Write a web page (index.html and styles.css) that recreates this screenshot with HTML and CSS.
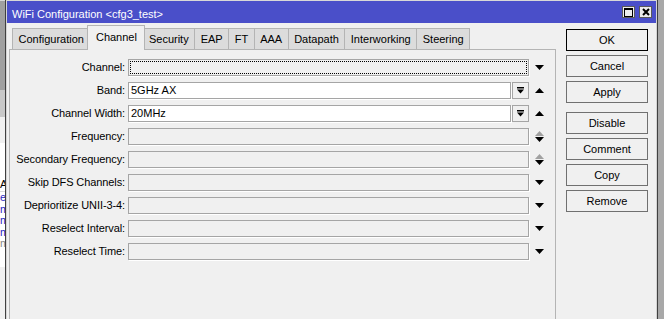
FILE: index.html
```html
<!DOCTYPE html>
<html>
<head>
<meta charset="utf-8">
<title>WiFi Configuration</title>
<link rel="stylesheet" href="styles.css">
</head>
<body>
<div class="screen">
  <div class="bg-left">
    <div class="bl-gray"></div>
    <div class="bl-mid"></div>
    <div class="bl-light"></div>
    <div class="bl-list">
      <div class="bl-head">A</div>
      <div class="bl-item">e</div>
      <div class="bl-item">m</div>
      <div class="bl-item">m</div>
      <div class="bl-item">m</div>
      <div class="bl-item dim">m</div>
    </div>
    <div class="bl-rest"></div>
  </div>

  <div class="window">
    <div class="frame">
      <div class="titlebar">
        <span class="title">WiFi Configuration &lt;cfg3_test&gt;</span>
        <div class="wbtns">
          <span class="wbtn"><svg width="9" height="9" viewBox="0 0 9 9"><path d="M0 0h9v9H0z M1 2v6h7V2z" fill="#000" fill-rule="evenodd"/></svg></span>
          <span class="wbtn"><svg width="8" height="8" viewBox="0 0 8 8"><path d="M1 1L7 7M7 1L1 7" stroke="#000" stroke-width="2" fill="none"/></svg></span>
        </div>
      </div>

      <div class="client">
        <div class="main">
          <div class="tabs">
            <div class="tab">Configuration</div>
            <div class="tab active">Channel</div>
            <div class="tab">Security</div>
            <div class="tab">EAP</div>
            <div class="tab">FT</div>
            <div class="tab">AAA</div>
            <div class="tab">Datapath</div>
            <div class="tab">Interworking</div>
            <div class="tab">Steering</div>
          </div>
          <div class="panel">
            <div class="form">
              <div class="lbl">Channel:</div>
              <div class="fld"><div class="inp focus"></div></div>
              <div class="ctl"><svg class="tri" width="9" height="5" viewBox="0 0 9 5"><path d="M0 0h9L4.5 5z"/></svg></div>

              <div class="lbl">Band:</div>
              <div class="fld"><div class="inp edit">5GHz AX</div><span class="ddbtn"><svg width="7" height="7" viewBox="0 0 7 7"><path d="M0 0h7v1.5H0z M0 2.5h7L3.5 6.5z"/></svg></span></div>
              <div class="ctl"><svg class="tri" width="9" height="5" viewBox="0 0 9 5"><path d="M0 5h9L4.5 0z"/></svg></div>

              <div class="lbl">Channel Width:</div>
              <div class="fld"><div class="inp edit">20MHz</div><span class="ddbtn"><svg width="7" height="7" viewBox="0 0 7 7"><path d="M0 0h7v1.5H0z M0 2.5h7L3.5 6.5z"/></svg></span></div>
              <div class="ctl"><svg class="tri" width="9" height="5" viewBox="0 0 9 5"><path d="M0 5h9L4.5 0z"/></svg></div>

              <div class="lbl">Frequency:</div>
              <div class="fld"><div class="inp"></div></div>
              <div class="ctl"><svg class="tri" width="9" height="11" viewBox="0 0 9 11"><path d="M0 5h9L4.5 0z" fill="#a0a0a0"/><path d="M0 6h9L4.5 11z"/></svg></div>

              <div class="lbl">Secondary Frequency:</div>
              <div class="fld"><div class="inp"></div></div>
              <div class="ctl"><svg class="tri" width="9" height="11" viewBox="0 0 9 11"><path d="M0 5h9L4.5 0z" fill="#a0a0a0"/><path d="M0 6h9L4.5 11z"/></svg></div>

              <div class="lbl">Skip DFS Channels:</div>
              <div class="fld"><div class="inp"></div></div>
              <div class="ctl"><svg class="tri" width="9" height="5" viewBox="0 0 9 5"><path d="M0 0h9L4.5 5z"/></svg></div>

              <div class="lbl">Deprioritize UNII-3-4:</div>
              <div class="fld"><div class="inp"></div></div>
              <div class="ctl"><svg class="tri" width="9" height="5" viewBox="0 0 9 5"><path d="M0 0h9L4.5 5z"/></svg></div>

              <div class="lbl">Reselect Interval:</div>
              <div class="fld"><div class="inp"></div></div>
              <div class="ctl"><svg class="tri" width="9" height="5" viewBox="0 0 9 5"><path d="M0 0h9L4.5 5z"/></svg></div>

              <div class="lbl">Reselect Time:</div>
              <div class="fld"><div class="inp"></div></div>
              <div class="ctl"><svg class="tri" width="9" height="5" viewBox="0 0 9 5"><path d="M0 0h9L4.5 5z"/></svg></div>
            </div>
          </div>
        </div>

        <div class="buttons">
          <div class="btn default">OK</div>
          <div class="btn">Cancel</div>
          <div class="btn">Apply</div>
          <div class="btn group">Disable</div>
          <div class="btn">Comment</div>
          <div class="btn">Copy</div>
          <div class="btn">Remove</div>
        </div>
      </div>
    </div>
  </div>

  <div class="bg-right"></div>
</div>
</body>
</html>
```

FILE: styles.css
```css
* { box-sizing: border-box; margin: 0; padding: 0; }

html, body {
  width: 664px;
  height: 319px;
  overflow: hidden;
  background: #a0a0a0;
}

body {
  font-family: "Liberation Sans", Arial, sans-serif;
  font-size: 11px;
  color: #000;
}

.screen {
  display: flex;
  height: 319px;
  overflow: hidden;
}

/* background application (left edge) */
.bg-left {
  width: 5px;
  flex: none;
  display: flex;
  flex-direction: column;
  overflow: hidden;
}
.bl-gray { height: 90px; background: #a0a0a0; border-top: 1px solid #d8d8d8; }
.bl-mid { height: 27px; background: #c8c8c8; }
.bl-light { height: 27px; background: #f0f0f0; border-bottom: 1px solid #fff; }
.bl-list {
  height: 123px;
  background: #fff;
  padding-top: 34px;
  line-height: 11.5px;
  white-space: nowrap;
}
.bl-head { height: 14px; line-height: 13px; border-bottom: 1px solid #dcdcdc; color: #000; }
.bl-item { height: 11.5px; color: #2a2ac0; }
.bl-item.dim { color: #8a8a8a; }
.bl-rest { flex: 1; background: #f0f0f0; }

.bg-right {
  flex: 1;
  background: #a8a8a8;
}

/* window */
.window {
  width: 653px;
  flex: none;
  height: 340px;
  border-left: 1px solid #404040;
  border-right: 1px solid #404040;
  background: #d4d4d4;
  padding: 0 1px;
}
.frame {
  height: 100%;
  background: #f0f0f0;
  display: flex;
  flex-direction: column;
  border-top: 1px solid #d8d8d8;
}

.titlebar {
  height: 22px;
  flex: none;
  background: #4a4fc9;
  display: flex;
  justify-content: space-between;
  align-items: center;
  padding: 0 4px 0 5px;
}
.title {
  color: #fff;
  font-size: 11px;
  padding-top: 3px;
}
.wbtns { display: flex; gap: 4px; }
.wbtn {
  width: 13px;
  height: 12px;
  background: #ececec;
  border: 1px solid #5a5a5a;
  display: flex;
  align-items: center;
  justify-content: center;
}

.client {
  flex: 1;
  display: flex;
  padding: 2px 8px 0 2px;
}

.main {
  width: 547px;
  flex: none;
  display: flex;
  flex-direction: column;
}

.tabs {
  height: 24px;
  flex: none;
  display: flex;
  align-items: flex-end;
  padding-left: 3px;
}
.tab {
  height: 21px;
  line-height: 21px;
  padding: 0 5.5px;
  background: #dcdcdc;
  border: 1px solid #b4b4b4;
  border-bottom: none;
  margin-right: -1px;
  white-space: nowrap;
}
.tab.active {
  height: 25px;
  line-height: 22px;
  padding: 0 7.5px;
  margin: 0 -3px -1px -2px;
  background: #f0f0f0;
  position: relative;
  z-index: 1;
}

.panel {
  flex: 1;
  border: 1px solid #b4b4b4;
  background: #f0f0f0;
}

.form {
  display: grid;
  grid-template-columns: 118px 401px 26px;
  grid-auto-rows: 17px;
  row-gap: 6px;
  padding-top: 9px;
}
.lbl {
  text-align: right;
  padding-right: 3px;
  line-height: 17px;
  white-space: nowrap;
  letter-spacing: -0.1px;
}
.fld {
  display: flex;
  gap: 1px;
}
.inp {
  flex: 1;
  height: 17px;
  border: 1px solid #a5a5a5;
  box-shadow: 1px 1px 0 #fff;
  background: #f0f0f0;
  line-height: 15px;
  padding-left: 2px;
  white-space: nowrap;
}
.inp.edit { background: #fff; }
.inp.focus {
  outline: 1px dotted #000;
  outline-offset: -3px;
}
.ddbtn {
  width: 17px;
  height: 17px;
  flex: none;
  border: 1px solid #a5a5a5;
  background: #f0f0f0;
  display: flex;
  align-items: center;
  justify-content: center;
}
.ctl {
  display: flex;
  align-items: center;
  padding-left: 6px;
}
.tri { display: block; }

/* buttons column */
.buttons {
  width: 82px;
  flex: none;
  margin-left: 10px;
  padding-top: 4px;
  display: flex;
  flex-direction: column;
  gap: 4px;
}
.btn {
  height: 22px;
  border: 1px solid #707070;
  background: #f0f0f0;
  text-align: center;
  line-height: 20px;
}
.btn.default { border-color: #000; }
.btn.group { margin-top: 5px; }
```
